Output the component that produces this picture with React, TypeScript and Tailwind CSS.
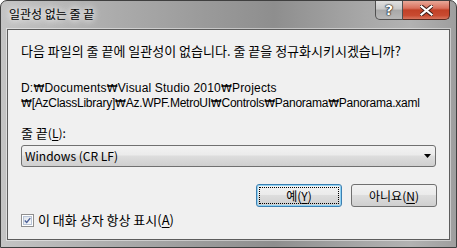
import React from "react";

const font = { fontFamily: '"Noto Sans CJK KR", "Noto Sans", sans-serif' };

function W() {
  return (
    <span style={{ fontFamily: '"DejaVu Sans", "Liberation Sans", sans-serif' }} className="text-[11px]">
      ₩
    </span>
  );
}

export default function App() {
  return (
    <div
      className="w-[457px] h-[248px] flex flex-col rounded-t-[7px] border border-[#3f3f3f] px-[6px] pb-[7px] bg-[linear-gradient(to_right,#c4c4c4_0%,#b0b0b0_20%,#9a9a9a_45%,#8e8e8e_60%,#a8a8a8_80%,#b2b2b2_90%,#9e9e9e_100%)] text-[12px] text-black"
      style={font}
    >
      {/* title bar */}
      <div className="h-[28px] flex items-start justify-between shrink-0">
        <div className="pl-[2px] pt-[4px] text-[12px] leading-[18px] text-black [text-shadow:0_0_6px_#ffffff,0_0_10px_#ffffff]">
          일관성 없는 줄 끝
        </div>
        <div className="flex items-start">
          <div className="w-[28px] h-[19px] rounded-bl-[5px] border border-t-0 border-[#505050] bg-[linear-gradient(to_bottom,#e0e0e0_0%,#c8c8c8_45%,#a8a8a8_50%,#b8b8b8_100%)] flex items-center justify-center text-[14px] font-bold text-white leading-none [text-shadow:0_0_1px_#000,0_0_1px_#000,0_0_2px_#222]" style={{ fontFamily: '"DejaVu Sans", sans-serif' }}>
            ?
          </div>
          <div className="w-[47px] h-[19px] rounded-br-[5px] border border-t-0 border-l-0 border-[#5a2a20] bg-[linear-gradient(to_bottom,#e8a898_0%,#d9705c_40%,#c24127_50%,#c84a30_80%,#d8765f_100%)] flex items-center justify-center">
            <svg width="13" height="11" viewBox="0 0 13 11">
              <path d="M1 1 L12 10 M12 1 L1 10" stroke="#3a1a14" strokeWidth="4" strokeLinecap="square" />
              <path d="M1.5 1.5 L11.5 9.5 M11.5 1.5 L1.5 9.5" stroke="#ffffff" strokeWidth="2.2" strokeLinecap="square" />
            </svg>
          </div>
        </div>
      </div>

      {/* client area */}
      <div className="flex-1 border border-[#5c5c5c] bg-[#f0f0f0] shadow-[0_0_0_1px_rgba(255,255,255,0.45)] px-[13px] flex flex-col">
        <div className="mt-[13px] text-[13px] leading-[16px]">
          다음 파일의 줄 끝에 일관성이 없습니다. 줄 끝을 정규화시키시겠습니까?
        </div>
        <div
          className="mt-[22px] leading-[14px] text-[12px] whitespace-nowrap"
          style={{ fontFamily: '"Liberation Sans", sans-serif' }}
        >
          <div className="tracking-[0.18px]">D:<W />Documents<W />Visual Studio 2010<W />Projects</div>
          <div className="tracking-[-0.25px]"><W />[AzClassLibrary]<W />Az.WPF.MetroUI<W />Controls<W />Panorama<W />Panorama.xaml</div>
        </div>
        <div className="mt-[14px] leading-[16px]">
          <span className="text-[13px]">줄 끝</span>(<span className="underline underline-offset-2">L</span>):
        </div>
        <div className="mt-[4px] h-[22px] w-[415px] rounded-[3px] border border-[#707070] bg-[linear-gradient(to_bottom,#f2f2f2_0%,#ebebeb_45%,#dddddd_50%,#cfcfcf_100%)] flex items-center justify-between pl-[3px] pr-[4px]">
          <span className="leading-[16px]">Windows (CR LF)</span>
          <svg width="7" height="4" viewBox="0 0 7 4">
            <path d="M0 0 H7 L3.5 4 Z" fill="#000" />
          </svg>
        </div>
        <div className="mt-[17px] flex justify-end gap-[9px] mr-[-1px]">
          <div className="w-[86px] h-[23px] rounded-[3px] border border-[#3c7fb1] shadow-[inset_0_0_0_1px_#8fd3f5] bg-[linear-gradient(to_bottom,#f2f2f2_0%,#ebebeb_45%,#dddddd_50%,#cfcfcf_100%)] p-[2px]">
            <div className="w-full h-full border border-dotted border-black flex items-center justify-center leading-[16px]">
              예(<span className="underline underline-offset-2">Y</span>)
            </div>
          </div>
          <div className="w-[86px] h-[23px] rounded-[3px] border border-[#707070] bg-[linear-gradient(to_bottom,#f2f2f2_0%,#ebebeb_45%,#dddddd_50%,#cfcfcf_100%)] flex items-center justify-center leading-[16px]">
            아니요(<span className="underline underline-offset-2">N</span>)
          </div>
        </div>
        <div className="mt-[5px] flex items-center gap-[4px]">
          <div className="w-[13px] h-[13px] border border-[#8f8f8f] bg-white p-[1px]">
            <div className="w-full h-full border border-[#b8c4d6] bg-[linear-gradient(135deg,#dfe4ec,#f8f9fb)] flex items-center justify-center">
              <svg width="9" height="9" viewBox="0 0 9 9">
                <path d="M1 4.5 L3.5 7 L8 1.5" stroke="#4a5f97" strokeWidth="1.8" fill="none" />
              </svg>
            </div>
          </div>
          <span className="text-[13px] leading-[16px]">
            이 대화 상자 항상 표시(<span className="underline underline-offset-2">A</span>)
          </span>
        </div>
      </div>
    </div>
  );
}
